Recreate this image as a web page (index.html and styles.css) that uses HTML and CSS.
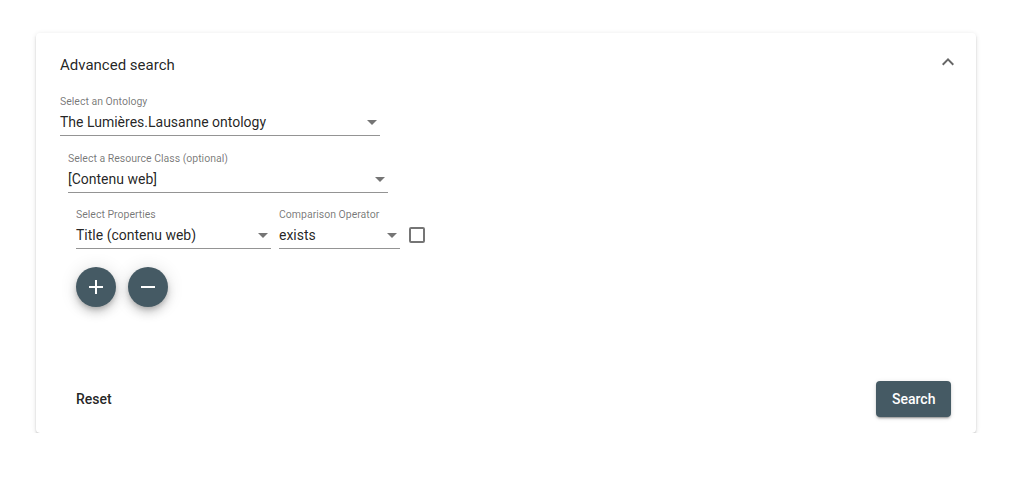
FILE: index.html
```html
<!DOCTYPE html>
<html lang="en">
<head>
    <meta charset="UTF-8">
    <title>Advanced search</title>
    <link rel="stylesheet" href="styles.css">
</head>
<body>
    <!-- Search panel -->
    <div class="panel">
        <div class="panel-header">
            <span class="panel-title">Advanced search</span>
            <svg class="chevron" width="24" height="24" viewBox="0 0 24 24">
                <path d="M7.41 15.41L12 10.83l4.59 4.58L18 14l-6-6-6 6z" fill="#666"/>
            </svg>
        </div>

        <div class="panel-body">
            <div class="field field-wide">
                <span class="field-label">Select an Ontology</span>
                <div class="field-value">
                    <span>The Lumières.Lausanne ontology</span>
                    <span class="arrow"></span>
                </div>
            </div>

            <div class="level">
                <div class="field field-wide">
                    <span class="field-label">Select a Resource Class (optional)</span>
                    <div class="field-value">
                        <span>[Contenu web]</span>
                        <span class="arrow"></span>
                    </div>
                </div>

                <div class="level level-inner">
                    <div class="prop-row">
                        <div class="field field-prop">
                            <span class="field-label">Select Properties</span>
                            <div class="field-value">
                                <span>Title (contenu web)</span>
                                <span class="arrow"></span>
                            </div>
                        </div>
                        <div class="field field-op">
                            <span class="field-label">Comparison Operator</span>
                            <div class="field-value">
                                <span>exists</span>
                                <span class="arrow"></span>
                            </div>
                        </div>
                        <span class="checkbox"></span>
                    </div>

                    <div class="fab-row">
                        <button class="fab" aria-label="Add property">
                            <svg width="24" height="24" viewBox="0 0 24 24"><path d="M19 13h-6v6h-2v-6H5v-2h6V5h2v6h6v2z" fill="#fff"/></svg>
                        </button>
                        <button class="fab" aria-label="Remove property">
                            <svg width="24" height="24" viewBox="0 0 24 24"><path d="M19 13H5v-2h14v2z" fill="#fff"/></svg>
                        </button>
                    </div>
                </div>
            </div>
        </div>

        <div class="panel-footer">
            <button class="btn-flat">Reset</button>
            <button class="btn-raised">Search</button>
        </div>
    </div>
</body>
</html>
```

FILE: styles.css
```css
body {
    font-family: Roboto, "Helvetica Neue", sans-serif;
    background-color: #fff;
    margin: 0;
    padding: 33px 43px 0 36px;
    color: rgba(0, 0, 0, 0.87);
}

/* Panel */
.panel {
    width: 940px;
    height: 400px;
    background: #fff;
    border-radius: 4px;
    box-shadow: 0 3px 1px -2px rgba(0, 0, 0, 0.2), 0 2px 2px 0 rgba(0, 0, 0, 0.14), 0 1px 5px 0 rgba(0, 0, 0, 0.12);
    display: flex;
    flex-direction: column;
    box-sizing: border-box;
}

.panel-header {
    height: 64px;
    padding: 0 16px 0 24px;
    display: flex;
    align-items: center;
    justify-content: space-between;
}

.panel-title {
    font-size: 15px;
}

.chevron {
    margin-top: -6px;
}

.panel-body {
    padding: 0 24px;
    flex: 1;
}

.level {
    padding-left: 8px;
    margin-top: 18px;
}

.level-inner {
    margin-top: 17px;
}

/* Select fields */
.field {
    display: flex;
    flex-direction: column;
}

.field-wide {
    width: 320px;
}

.field-prop {
    width: 195px;
}

.field-op {
    width: 121px;
}

.field-label {
    font-size: 10.5px;
    line-height: 12px;
    color: rgba(0, 0, 0, 0.54);
    margin-top: -1px;
}

.field-value {
    display: flex;
    align-items: center;
    justify-content: space-between;
    font-size: 14px;
    line-height: 18px;
    padding: 5px 0 4px;
    border-bottom: 1px solid rgba(0, 0, 0, 0.42);
}

.arrow {
    width: 0;
    height: 0;
    border-left: 5px solid transparent;
    border-right: 5px solid transparent;
    border-top: 5px solid rgba(0, 0, 0, 0.54);
    margin-right: 3px;
}

.prop-row {
    display: flex;
    align-items: flex-end;
    gap: 8px;
}

.checkbox {
    width: 12px;
    height: 12px;
    border: 2px solid rgba(0, 0, 0, 0.54);
    border-radius: 2px;
    margin: 0 0 6px 1px;
}

/* Round buttons */
.fab-row {
    display: flex;
    gap: 12px;
    margin-top: 18px;
}

.fab {
    width: 40px;
    height: 40px;
    border-radius: 50%;
    border: none;
    padding: 0;
    background-color: #455a64;
    display: flex;
    align-items: center;
    justify-content: center;
    box-shadow: 0 3px 5px -1px rgba(0, 0, 0, 0.2), 0 6px 10px 0 rgba(0, 0, 0, 0.14), 0 1px 18px 0 rgba(0, 0, 0, 0.12);
    cursor: pointer;
}

/* Footer */
.panel-footer {
    display: flex;
    justify-content: space-between;
    align-items: center;
    padding: 0 25px 16px 24px;
}

.btn-flat,
.btn-raised {
    font-family: Roboto, sans-serif;
    font-size: 14px;
    font-weight: 500;
    height: 36px;
    padding: 0 16px;
    border: none;
    border-radius: 4px;
    cursor: pointer;
}

.btn-flat {
    background: transparent;
    color: rgba(0, 0, 0, 0.87);
}

.btn-raised {
    width: 75px;
    background-color: #455a64;
    color: #fff;
    box-shadow: 0 3px 1px -2px rgba(0, 0, 0, 0.2), 0 2px 2px 0 rgba(0, 0, 0, 0.14), 0 1px 5px 0 rgba(0, 0, 0, 0.12);
}
```
